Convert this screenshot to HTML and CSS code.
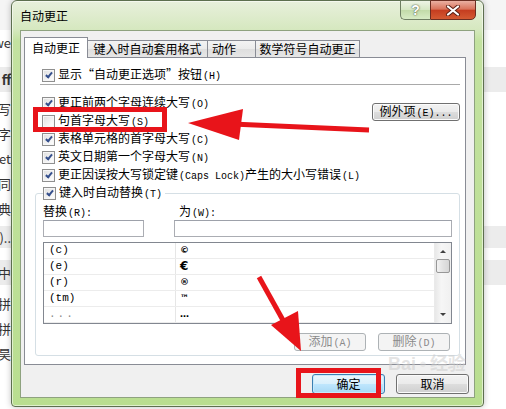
FILE: index.html
```html
<!DOCTYPE html>
<html lang="zh-CN">
  <head>
    <meta charset="UTF-8" />
    <meta name="viewport" content="width=device-width, initial-scale=1.0" />
    <title>自动更正</title>
    <link rel="stylesheet" href="styles.css">
  </head>
  <body>
    <!-- page behind the dialog -->
    <div class="page">
      <div class="pg-row h30 band-lite"></div>
      <div class="pg-row h24"><span class="cell">we</span></div>
      <div class="pg-row h13"></div>
      <div class="pg-row band"><span class="cell bold">ff</span></div>
      <div class="pg-row h4"></div>
      <div class="pg-row"><span class="cell">写</span></div>
      <div class="pg-row"><span class="cell">字</span></div>
      <div class="pg-row"><span class="cell">et</span></div>
      <div class="pg-row"><span class="cell">同</span></div>
      <div class="pg-row"><span class="cell">典</span></div>
      <div class="pg-row h5"></div>
      <div class="pg-row h22 band"><span class="cell">)..</span></div>
      <div class="pg-row h12"></div>
      <div class="pg-row band"><span class="cell">中</span></div>
      <div class="pg-row h6"></div>
      <div class="pg-row"><span class="cell">拼</span></div>
      <div class="pg-row"><span class="cell">拼</span></div>
      <div class="pg-row"><span class="cell">昊</span></div>
    </div>

    <div class="dialog">
      <div class="titlebar">
        <span class="title">自动更正</span>
        <div class="caption-btns">
          <div class="cap-btn help">?</div>
          <div class="cap-btn close">
            <svg width="16" height="11" viewBox="0 0 16 11">
              <path d="M3 1.5 L13 9.5 M13 1.5 L3 9.5" stroke="#5a1f14" stroke-width="4" stroke-linecap="round" fill="none"/>
              <path d="M3 1.5 L13 9.5 M13 1.5 L3 9.5" stroke="#ffffff" stroke-width="2.2" stroke-linecap="round" fill="none"/>
            </svg>
          </div>
        </div>
      </div>

      <div class="client">
        <div class="tabwrap">
          <div class="tabs">
            <div class="tab active">自动更正</div>
            <div class="tab tab-fmt">键入时自动套用格式</div>
            <div class="tab tab-act">动作</div>
            <div class="tab tab-math">数学符号自动更正</div>
          </div>

          <div class="panel">
            <div class="opt first"><span class="cb on"></span><span class="lbl">显示“自动更正选项”按钮<span class="mn">(H)</span></span></div>
            <div class="sep"></div>

            <div class="opts">
              <div class="opt"><span class="cb on"></span><span class="lbl">更正前两个字母连续大写<span class="mn">(O)</span></span></div>
              <button class="btn exc">例外项<span class="mn">(E)...</span></button>
              <div class="opt"><span class="cb"></span><span class="lbl">句首字母大写<span class="mn">(S)</span></span></div>
              <div class="opt"><span class="cb on"></span><span class="lbl">表格单元格的首字母大写<span class="mn">(C)</span></span></div>
              <div class="opt"><span class="cb on"></span><span class="lbl">英文日期第一个字母大写<span class="mn">(N)</span></span></div>
              <div class="opt"><span class="cb on"></span><span class="lbl">更正因误按大写锁定键<span class="mn">(Caps Lock)</span>产生的大小写错误<span class="mn">(L)</span></span></div>
            </div>

            <fieldset class="group">
              <legend class="opt legend"><span class="cb on"></span><span class="lbl">键入时自动替换<span class="mn">(T)</span></span></legend>

              <div class="fields">
                <label>替换<span class="mn">(R):</span></label>
                <label class="right">为<span class="mn">(W):</span></label>
                <div class="input"></div>
                <div class="input"></div>
              </div>

              <div class="list">
                <div class="rows">
                  <div class="row"><span class="key">(c)</span><span class="val">©</span></div>
                  <div class="row"><span class="key">(e)</span><span class="val euro">€</span></div>
                  <div class="row"><span class="key">(r)</span><span class="val">®</span></div>
                  <div class="row"><span class="key">(tm)</span><span class="val">™</span></div>
                  <div class="row"><span class="key dots">...</span><span class="val">…</span></div>
                </div>
                <div class="scrollbar">
                  <span class="arrow up"></span>
                  <span class="thumb"></span>
                  <span class="arrow down"></span>
                </div>
              </div>

              <div class="group-btns">
                <button class="btn off">添加<span class="mn">(A)</span></button>
                <button class="btn off">删除<span class="mn">(D)</span></button>
              </div>
            </fieldset>
          </div>
        </div>

        <div class="footer">
          <button class="btn default">确定</button>
          <button class="btn">取消</button>
        </div>
      </div>
    </div>

    <!-- red annotations drawn over the screenshot -->
    <svg class="marks" width="506" height="409" viewBox="0 0 506 409">
      <g fill="none" stroke="#e8141a" stroke-width="5">
        <rect x="35.5" y="109.5" width="129" height="20" />
        <line x1="369" y1="130" x2="232" y2="124" />
        <line x1="259" y1="277" x2="284" y2="322" />
        <rect x="298.5" y="370.5" width="80" height="25" />
      </g>
      <g fill="#e8141a">
        <polygon points="188,123 243,109 239,140" />
        <polygon points="301,351 271,325 298,311" />
      </g>
    </svg>
    <div class="watermark">Bai<span class="paw">●</span>经验</div>
  </body>
</html>
```

FILE: styles.css
```css
*,
*::after,
*::before {
  margin: 0;
  padding: 0;
  box-sizing: border-box;
}

:root {
  --ui-font: "Noto Sans CJK SC", sans-serif;
  --mono-font: "Liberation Mono", monospace;

  --tab-border: #898c95;
  --btn-border: #707070;
  --red: #e8141a;
}

body {
  width: 506px;
  height: 409px;
  overflow: hidden;
  position: relative;
  background: #fff;
  font-family: var(--ui-font);
  font-size: 12px;
  color: #000;
}

/* page behind */
.page {
  display: flex;
  flex-direction: column;
}

.pg-row {
  height: 25px;
  display: flex;
  align-items: center;
}

.pg-row.h30 { height: 30px; }
.pg-row.h24 { height: 24px; }
.pg-row.h22 { height: 22px; }
.pg-row.h13 { height: 13px; }
.pg-row.h12 { height: 12px; }
.pg-row.h6 { height: 6px; }
.pg-row.h5 { height: 5px; }
.pg-row.h4 { height: 4px; }

.band-lite { background: #f5f5f5; }
.band { background: #ececec; }

.cell {
  width: 11px;
  overflow: hidden;
  display: flex;
  justify-content: flex-end;
  white-space: nowrap;
  font-size: 13px;
  color: #333;
}

.cell.bold {
  font-weight: 700;
}

/* dialog window */
.dialog {
  position: absolute;
  left: 11px;
  top: 0;
  width: 473px;
  height: 407px;
  border: 1px solid #5d6f4f;
  border-radius: 6px 6px 4px 4px;
  padding: 0 8px 8px 8px;
  display: flex;
  flex-direction: column;
  background: linear-gradient(180deg, #e8f0dc 0px, #d6e8c0 28px, #c3e2a0 40px, #b9de90 100%);
  box-shadow: inset 0 0 0 1px rgba(255, 255, 255, 0.55), 0 0 6px rgba(0, 0, 0, 0.25);
}

.titlebar {
  height: 29px;
  display: flex;
  justify-content: space-between;
  align-items: flex-start;
}

.title {
  margin-top: 7px;
  line-height: 16px;
}

.caption-btns {
  display: flex;
  margin-top: -1px;
  margin-right: -1px;
}

.cap-btn {
  height: 20px;
  display: flex;
  align-items: center;
  justify-content: center;
}

.help {
  width: 30px;
  border: 1px solid #6e7f62;
  border-right: none;
  border-radius: 0 0 0 5px;
  background: linear-gradient(180deg, #eef5e6 0%, #d6e8c4 48%, #c2dba9 52%, #d8ecc5 100%);
  color: #fff;
  font-family: "Liberation Sans", sans-serif;
  font-weight: 700;
  font-size: 14px;
  text-shadow: 0 0 2px #556447, 0 0 1px #556447;
}

.close {
  width: 46px;
  border: 1px solid #6b2e22;
  border-radius: 0 0 5px 0;
  background: linear-gradient(180deg, #eab0a2 0%, #d9735b 45%, #c53d20 52%, #d45a32 100%);
}

.client {
  flex: 1;
  border: 1px solid #8ea27f;
  background: #f0f0f0;
  display: flex;
  flex-direction: column;
}

.tabwrap {
  margin: 6px 8px 0 3px;
}

/* tabs */
.tabs {
  display: flex;
  align-items: flex-end;
  height: 20px;
}

.tab {
  height: 17px;
  line-height: 16px;
  border: 1px solid var(--tab-border);
  border-bottom: none;
  margin-left: -1px;
  text-align: center;
  background: linear-gradient(180deg, #f3f3f3 0%, #ebebeb 50%, #dedede 51%, #e6e6e6 100%);
}

.tab.active {
  width: 64px;
  height: 21px;
  margin-left: 0;
  margin-bottom: -1px;
  padding-top: 2px;
  background: #fff;
  position: relative;
  z-index: 1;
}

.tab-fmt { width: 121px; }
.tab-act { width: 49px; text-align: left; padding-left: 4px; }
.tab-math { width: 105px; }

.panel {
  position: relative;
  height: 308px;
  border: 1px solid var(--tab-border);
  background: #fff;
  padding: 8px 5px 0 9px;
}

/* options */
.opt {
  height: 18px;
  display: flex;
  align-items: center;
  padding-left: 8px;
  white-space: nowrap;
}

.lbl {
  line-height: 16px;
}

.mn {
  font-family: var(--mono-font);
  font-size: 10px;
  margin-left: 1px;
}

.cb {
  width: 13px;
  height: 13px;
  margin-right: 3px;
  border: 1px solid #8f8f8f;
  background: linear-gradient(135deg, #dedede 0%, #f7f7f7 70%, #fff 100%);
  box-shadow: inset 0 0 0 1px #f6f6f6;
  display: flex;
  justify-content: center;
  align-items: center;
  flex-shrink: 0;
}

.cb.on::after {
  content: "";
  width: 4px;
  height: 7px;
  margin-top: -2px;
  border: solid #354f8c;
  border-width: 0 2px 2px 0;
  transform: rotate(40deg);
}

.sep {
  height: 2px;
  margin: 0 0 8px 6px;
  border-top: 1px solid #a9a9a9;
  border-bottom: 1px solid #fff;
}

.opts {
  display: grid;
  grid-template-columns: 1fr auto;
}

.opts .opt {
  grid-column: 1;
}

.exc {
  grid-column: 2;
  grid-row: 1 / span 2;
  align-self: center;
  width: 88px;
  height: 18px;
}

/* buttons */
.btn {
  display: block;
  font-family: var(--ui-font);
  font-size: 12px;
  line-height: 14px;
  text-align: center;
  color: #000;
  border: 1px solid var(--btn-border);
  border-radius: 3px;
  background: linear-gradient(180deg, #f2f2f2 0%, #ebebeb 48%, #dddddd 52%, #cfcfcf 100%);
  box-shadow: inset 0 0 0 1px #fbfbfb;
}

.btn.off {
  color: #8a8a8a;
  border-color: #adb2b5;
  background: #f4f4f4;
  box-shadow: none;
}

.btn.default {
  border-color: #3c7fb1;
  background: linear-gradient(180deg, #eaf6fd 0%, #d9f0fc 48%, #bee6fd 52%, #a7d9f5 100%);
  box-shadow: inset 0 0 0 1px #c8e9fb;
}

/* group box */
.group {
  margin-left: 1px;
  border: 1px solid #d5dfe5;
  border-radius: 3px;
  padding: 0 7px 5px 7px;
  height: 172px;
}

.legend {
  padding: 0 3px 0 0;
  background: #fff;
}

.fields {
  display: grid;
  grid-template-columns: 101px 1fr;
  column-gap: 30px;
}

.fields label {
  height: 18px;
  line-height: 18px;
}

.fields label.right {
  padding-left: 5px;
}

.input {
  height: 17px;
  border: 1px solid #abadb3;
  border-top-color: #9da1aa;
  background: #fff;
}

.list {
  margin-top: 5px;
  height: 82px;
  border: 1px solid #828790;
  display: flex;
}

.rows {
  flex: 1;
}

.row {
  height: 16px;
  display: flex;
  border-bottom: 1px solid #ececec;
}

.row .key {
  width: 132px;
  padding-left: 5px;
  border-right: 1px solid #e6e6e6;
  font-family: var(--mono-font);
  font-size: 11px;
  line-height: 15px;
}

.row .key.dots {
  color: #8a8a8a;
  letter-spacing: 2px;
}

.row .val {
  padding-left: 4px;
  font-family: "DejaVu Sans", sans-serif;
  font-weight: 700;
  font-size: 9px;
  line-height: 15px;
}

.row .val.euro {
  font-size: 12px;
}

.scrollbar {
  width: 17px;
  background: linear-gradient(90deg, #e8e8e8, #f6f6f6 40%, #f0f0f0);
  border-left: 1px solid #eaeaea;
  display: flex;
  flex-direction: column;
  align-items: center;
}

.arrow {
  width: 0;
  height: 0;
  border-left: 3px solid transparent;
  border-right: 3px solid transparent;
}

.arrow.up {
  margin-top: 7px;
  border-bottom: 3px solid #404040;
}

.arrow.down {
  margin-top: auto;
  margin-bottom: 7px;
  border-top: 3px solid #404040;
}

.thumb {
  width: 14px;
  height: 14px;
  margin-top: 6px;
  border: 1px solid #979797;
  border-radius: 2px;
  background: linear-gradient(90deg, #f2f2f2, #e2e2e2 50%, #d6d6d6);
}

.group-btns {
  display: flex;
  justify-content: flex-end;
  gap: 12px;
  margin: 9px 2px 0 0;
}

.group-btns .btn {
  width: 72px;
  height: 18px;
}

/* footer */
.footer {
  display: flex;
  justify-content: flex-end;
  gap: 11px;
  padding: 9px 5px 0 0;
}

.footer .btn {
  width: 73px;
  height: 20px;
}

/* annotations */
.marks {
  position: absolute;
  left: 0;
  top: 0;
}

.watermark {
  position: absolute;
  left: 388px;
  top: 353px;
  height: 22px;
  display: flex;
  align-items: center;
  font-family: "Liberation Sans", var(--ui-font);
  font-weight: 700;
  font-size: 18px;
  line-height: 22px;
  color: rgba(205, 205, 205, 0.55);
}

.watermark .paw {
  font-size: 13px;
  margin: 0 3px;
  color: rgba(215, 215, 215, 0.45);
}
```
